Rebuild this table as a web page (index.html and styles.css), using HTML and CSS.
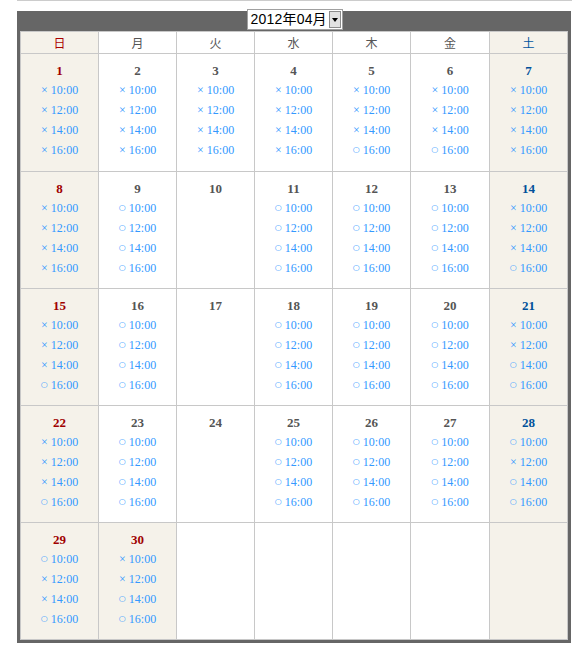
FILE: index.html
```html
<!DOCTYPE html>
<html lang="ja">
<head>
<meta charset="utf-8">
<title>予約カレンダー</title>
<link rel="stylesheet" href="styles.css">
</head>
<body>
<div class="rule"></div>
<div class="cal">
  <div class="cal-head">
    <div class="picker"><span class="picker-text">2012年04月</span><span class="picker-btn"><span class="tri"></span></span></div>
  </div>
  <div class="grid">
    <div class="hd sun">日</div>
    <div class="hd">月</div>
    <div class="hd">火</div>
    <div class="hd">水</div>
    <div class="hd">木</div>
    <div class="hd">金</div>
    <div class="hd sat">土</div>

    <div class="day sun"><div class="num">1</div><div class="slot"><span class="x">×</span> 10:00</div><div class="slot"><span class="x">×</span> 12:00</div><div class="slot"><span class="x">×</span> 14:00</div><div class="slot"><span class="x">×</span> 16:00</div></div>
    <div class="day"><div class="num">2</div><div class="slot"><span class="x">×</span> 10:00</div><div class="slot"><span class="x">×</span> 12:00</div><div class="slot"><span class="x">×</span> 14:00</div><div class="slot"><span class="x">×</span> 16:00</div></div>
    <div class="day"><div class="num">3</div><div class="slot"><span class="x">×</span> 10:00</div><div class="slot"><span class="x">×</span> 12:00</div><div class="slot"><span class="x">×</span> 14:00</div><div class="slot"><span class="x">×</span> 16:00</div></div>
    <div class="day"><div class="num">4</div><div class="slot"><span class="x">×</span> 10:00</div><div class="slot"><span class="x">×</span> 12:00</div><div class="slot"><span class="x">×</span> 14:00</div><div class="slot"><span class="x">×</span> 16:00</div></div>
    <div class="day"><div class="num">5</div><div class="slot"><span class="x">×</span> 10:00</div><div class="slot"><span class="x">×</span> 12:00</div><div class="slot"><span class="x">×</span> 14:00</div><div class="slot"><span class="o">○</span> 16:00</div></div>
    <div class="day"><div class="num">6</div><div class="slot"><span class="x">×</span> 10:00</div><div class="slot"><span class="x">×</span> 12:00</div><div class="slot"><span class="x">×</span> 14:00</div><div class="slot"><span class="o">○</span> 16:00</div></div>
    <div class="day sat"><div class="num">7</div><div class="slot"><span class="x">×</span> 10:00</div><div class="slot"><span class="x">×</span> 12:00</div><div class="slot"><span class="x">×</span> 14:00</div><div class="slot"><span class="x">×</span> 16:00</div></div>

    <div class="day sun"><div class="num">8</div><div class="slot"><span class="x">×</span> 10:00</div><div class="slot"><span class="x">×</span> 12:00</div><div class="slot"><span class="x">×</span> 14:00</div><div class="slot"><span class="x">×</span> 16:00</div></div>
    <div class="day"><div class="num">9</div><div class="slot"><span class="o">○</span> 10:00</div><div class="slot"><span class="o">○</span> 12:00</div><div class="slot"><span class="o">○</span> 14:00</div><div class="slot"><span class="o">○</span> 16:00</div></div>
    <div class="day"><div class="num">10</div></div>
    <div class="day"><div class="num">11</div><div class="slot"><span class="o">○</span> 10:00</div><div class="slot"><span class="o">○</span> 12:00</div><div class="slot"><span class="o">○</span> 14:00</div><div class="slot"><span class="o">○</span> 16:00</div></div>
    <div class="day"><div class="num">12</div><div class="slot"><span class="o">○</span> 10:00</div><div class="slot"><span class="o">○</span> 12:00</div><div class="slot"><span class="o">○</span> 14:00</div><div class="slot"><span class="o">○</span> 16:00</div></div>
    <div class="day"><div class="num">13</div><div class="slot"><span class="o">○</span> 10:00</div><div class="slot"><span class="o">○</span> 12:00</div><div class="slot"><span class="o">○</span> 14:00</div><div class="slot"><span class="o">○</span> 16:00</div></div>
    <div class="day sat"><div class="num">14</div><div class="slot"><span class="x">×</span> 10:00</div><div class="slot"><span class="x">×</span> 12:00</div><div class="slot"><span class="x">×</span> 14:00</div><div class="slot"><span class="o">○</span> 16:00</div></div>

    <div class="day sun"><div class="num">15</div><div class="slot"><span class="x">×</span> 10:00</div><div class="slot"><span class="x">×</span> 12:00</div><div class="slot"><span class="x">×</span> 14:00</div><div class="slot"><span class="o">○</span> 16:00</div></div>
    <div class="day"><div class="num">16</div><div class="slot"><span class="o">○</span> 10:00</div><div class="slot"><span class="o">○</span> 12:00</div><div class="slot"><span class="o">○</span> 14:00</div><div class="slot"><span class="o">○</span> 16:00</div></div>
    <div class="day"><div class="num">17</div></div>
    <div class="day"><div class="num">18</div><div class="slot"><span class="o">○</span> 10:00</div><div class="slot"><span class="o">○</span> 12:00</div><div class="slot"><span class="o">○</span> 14:00</div><div class="slot"><span class="o">○</span> 16:00</div></div>
    <div class="day"><div class="num">19</div><div class="slot"><span class="o">○</span> 10:00</div><div class="slot"><span class="o">○</span> 12:00</div><div class="slot"><span class="o">○</span> 14:00</div><div class="slot"><span class="o">○</span> 16:00</div></div>
    <div class="day"><div class="num">20</div><div class="slot"><span class="o">○</span> 10:00</div><div class="slot"><span class="o">○</span> 12:00</div><div class="slot"><span class="o">○</span> 14:00</div><div class="slot"><span class="o">○</span> 16:00</div></div>
    <div class="day sat"><div class="num">21</div><div class="slot"><span class="x">×</span> 10:00</div><div class="slot"><span class="x">×</span> 12:00</div><div class="slot"><span class="o">○</span> 14:00</div><div class="slot"><span class="o">○</span> 16:00</div></div>

    <div class="day sun"><div class="num">22</div><div class="slot"><span class="x">×</span> 10:00</div><div class="slot"><span class="x">×</span> 12:00</div><div class="slot"><span class="x">×</span> 14:00</div><div class="slot"><span class="o">○</span> 16:00</div></div>
    <div class="day"><div class="num">23</div><div class="slot"><span class="o">○</span> 10:00</div><div class="slot"><span class="o">○</span> 12:00</div><div class="slot"><span class="o">○</span> 14:00</div><div class="slot"><span class="o">○</span> 16:00</div></div>
    <div class="day"><div class="num">24</div></div>
    <div class="day"><div class="num">25</div><div class="slot"><span class="o">○</span> 10:00</div><div class="slot"><span class="o">○</span> 12:00</div><div class="slot"><span class="o">○</span> 14:00</div><div class="slot"><span class="o">○</span> 16:00</div></div>
    <div class="day"><div class="num">26</div><div class="slot"><span class="o">○</span> 10:00</div><div class="slot"><span class="o">○</span> 12:00</div><div class="slot"><span class="o">○</span> 14:00</div><div class="slot"><span class="o">○</span> 16:00</div></div>
    <div class="day"><div class="num">27</div><div class="slot"><span class="o">○</span> 10:00</div><div class="slot"><span class="o">○</span> 12:00</div><div class="slot"><span class="o">○</span> 14:00</div><div class="slot"><span class="o">○</span> 16:00</div></div>
    <div class="day sat"><div class="num">28</div><div class="slot"><span class="o">○</span> 10:00</div><div class="slot"><span class="x">×</span> 12:00</div><div class="slot"><span class="o">○</span> 14:00</div><div class="slot"><span class="o">○</span> 16:00</div></div>

    <div class="day sun"><div class="num">29</div><div class="slot"><span class="o">○</span> 10:00</div><div class="slot"><span class="x">×</span> 12:00</div><div class="slot"><span class="x">×</span> 14:00</div><div class="slot"><span class="o">○</span> 16:00</div></div>
    <div class="day hol"><div class="num">30</div><div class="slot"><span class="x">×</span> 10:00</div><div class="slot"><span class="x">×</span> 12:00</div><div class="slot"><span class="o">○</span> 14:00</div><div class="slot"><span class="o">○</span> 16:00</div></div>
    <div class="day"></div>
    <div class="day"></div>
    <div class="day"></div>
    <div class="day"></div>
    <div class="day sat"></div>
  </div>
</div>
</body>
</html>
```
FILE: styles.css
```css
html, body {
  margin: 0;
  padding: 0;
  background: #fff;
}

.rule {
  margin-left: 17px;
  width: 555px;
  height: 1px;
  background: #cccccc;
}

.cal {
  margin: 10px 0 0 17px;
  width: 554px;
  box-sizing: border-box;
  background: #666666;
  padding: 0 3px 3px 3px;
}

.cal-head {
  height: 20px;
  display: flex;
  justify-content: center;
}

.picker {
  margin-top: -2px;
  margin-left: 1px;
  width: 96px;
  height: 21px;
  box-sizing: border-box;
  border: 1px solid #a0a0a0;
  background: #fff;
  padding: 1px;
  display: flex;
  align-items: center;
  font-family: "Liberation Sans", "Noto Sans CJK JP", sans-serif;
  font-size: 14px;
  color: #000;
}

.picker-text {
  flex: 1;
  padding-left: 2px;
  line-height: 17px;
  white-space: nowrap;
  letter-spacing: 0.2px;
}

.picker-btn {
  width: 12px;
  height: 17px;
  box-sizing: border-box;
  border: 1px solid #8c8c8c;
  background: #e2e2e2;
  display: flex;
  align-items: center;
  justify-content: center;
}

.tri {
  width: 0;
  height: 0;
  border-left: 3.5px solid transparent;
  border-right: 3.5px solid transparent;
  border-top: 4px solid #000;
}

.grid {
  display: grid;
  grid-template-columns: 77px 77px 77px 77px 77px 78px 77px;
  grid-template-rows: 21px 117px 116px 116px 116px 116px;
  gap: 1px;
  padding: 1px;
  background: #c8c8c8;
}

.hd {
  background: #fff;
  display: flex;
  align-items: center;
  justify-content: center;
  font-family: "Noto Sans CJK JP", sans-serif;
  font-size: 12px;
  color: #555;
}

.hd.sun {
  background: #f5f2ea;
  color: #aa0000;
}

.hd.sat {
  background: #f5f2ea;
  color: #0055a0;
}

.day {
  background: #fff;
  text-align: center;
  padding-top: 7px;
  box-sizing: border-box;
  font-family: "Liberation Serif", "Noto Sans CJK JP", serif;
}

.day.sun,
.day.sat,
.day.hol {
  background: #f5f2ea;
}

.num {
  font-size: 13px;
  font-weight: bold;
  line-height: 19px;
  color: #555;
}

.day.sun .num,
.day.hol .num {
  color: #a00000;
}

.day.sat .num {
  color: #00509a;
}

.slot {
  font-size: 12px;
  line-height: 20px;
  color: #3399ff;
  white-space: nowrap;
}

.x {
  display: inline-block;
  width: 7px;
}

.o {
  display: inline-block;
  width: 7px;
  font-family: "DejaVu Sans", sans-serif;
  font-size: 8px;
  line-height: 1;
  vertical-align: 2px;
}
```
